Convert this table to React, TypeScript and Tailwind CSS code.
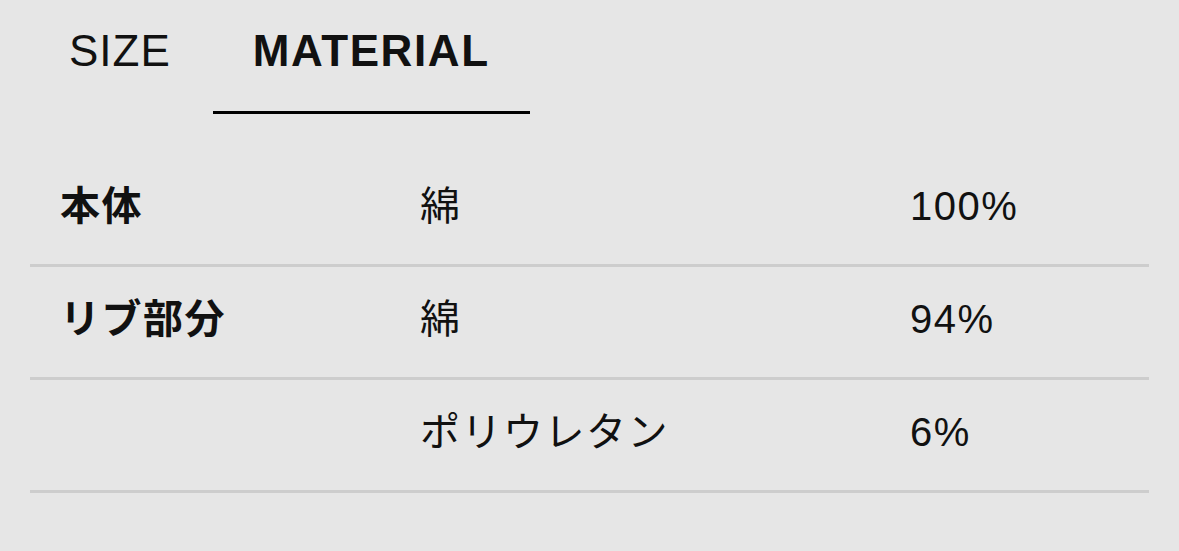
const rows = [
  { part: '本体', material: '綿', ratio: '100%' },
  { part: 'リブ部分', material: '綿', ratio: '94%' },
  { part: '', material: 'ポリウレタン', ratio: '6%' },
];

const font = { fontFamily: '"Liberation Sans", "Noto Sans CJK JP", sans-serif' };

export default function App() {
  return (
    <div className="min-h-screen w-full bg-[#e6e6e6] text-[#111111]" style={font}>
      <div className="mx-[30px]">
        <div className="flex">
          <div className="flex h-[114px] items-center border-b-[3px] border-transparent px-[39px] pb-[9px] text-[44px] tracking-[1px]">
            SIZE
          </div>
          <div className="ml-[3px] flex h-[114px] items-center border-b-[3px] border-black px-[40px] pb-[9px] text-[44px] font-bold tracking-[1.6px]">
            MATERIAL
          </div>
        </div>

        <div className="mt-[40px]">
          {rows.map((r, i) => (
            <div
              key={i}
              className="grid h-[113px] grid-cols-[360px_490px_1fr] items-center border-b-[3px] border-[#cdcdcd] pb-[6px] pl-[30px] text-[40px] tracking-[1.5px]"
            >
              <div className="font-bold">{r.part}</div>
              <div>{r.material}</div>
              <div>{r.ratio}</div>
            </div>
          ))}
        </div>
      </div>
    </div>
  );
}
